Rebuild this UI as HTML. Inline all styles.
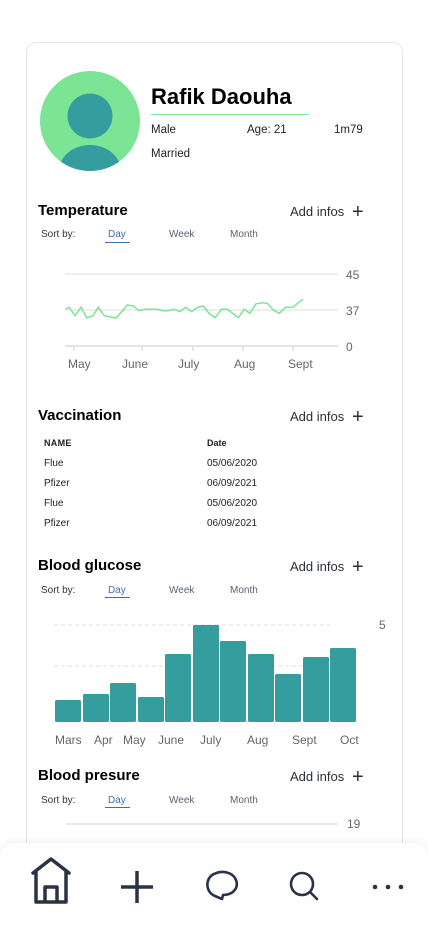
<!DOCTYPE html>
<html style="width:428px;height:926px;overflow:hidden"><head><meta charset="utf-8"><style>
*{margin:0;padding:0;box-sizing:border-box}
body{width:428px;height:926px;overflow:hidden;background:#fff;font-family:"Liberation Sans",Arial,sans-serif;position:relative;color:#111}
.a{position:absolute;white-space:nowrap}
.card{position:absolute;left:26px;top:42px;width:377px;height:870px;border:1px solid #e3e6ea;border-radius:10px;background:#fff}
.h{font-size:15px;font-weight:bold;color:#000;line-height:18px}
.add{font-size:13px;color:#2a2f3a;line-height:16px}
.sm{font-size:10px;color:#333;line-height:12px}
.g{font-size:10px;color:#5a6270;line-height:12px}
.tx{font-size:10px;color:#222;line-height:12px}
.ax{font-size:12px;color:#666;line-height:14px}
.nav{position:absolute;left:0;top:843px;width:428px;height:83px;background:#fff;border-radius:14px 14px 0 0;box-shadow:0 -2px 8px rgba(0,0,0,0.06)}
</style></head><body>
<div class="card"></div>
<svg class="a" style="left:40px;top:71px" width="100" height="100" viewBox="0 0 100 100">
<defs><clipPath id="c"><circle cx="50" cy="50" r="50"/></clipPath></defs>
<circle cx="50" cy="50" r="50" fill="#7be495"/>
<circle cx="50" cy="45" r="22.5" fill="#359d9e"/>
<g clip-path="url(#c)"><ellipse cx="50" cy="100" rx="31" ry="26" fill="#359d9e"/></g>
</svg>
<div class="a" style="left:151px;top:84px;font-size:22px;font-weight:bold;color:#000;line-height:26px">Rafik Daouha</div>
<div class="a" style="left:151px;top:114px;width:158px;height:1px;background:#7be495"></div>
<div class="a" style="left:151px;top:123px;font-size:11.5px;color:#222;line-height:14px">Male</div>
<div class="a" style="left:247px;top:123px;font-size:11.5px;color:#222;line-height:14px">Age: 21</div>
<div class="a" style="left:334px;top:123px;font-size:11.5px;color:#222;line-height:14px">1m79</div>
<div class="a" style="left:151px;top:147px;font-size:11.5px;color:#222;line-height:14px">Married</div>

<div class="a h" style="left:38px;top:202px">Temperature</div>
<div class="a add" style="left:290px;top:204px">Add infos</div>
<div class="a" style="left:352px;top:204px;font-size:20px;line-height:16px;color:#2a2f3a">+</div>
<div class="a sm" style="left:41px;top:229px">Sort by:</div>
<div class="a g" style="left:108px;top:229px;color:#3b6fb3">Day</div>
<div class="a" style="left:105px;top:242px;width:25px;height:1px;background:#3b6fb3"></div>
<div class="a g" style="left:169px;top:229px">Week</div>
<div class="a g" style="left:230px;top:229px">Month</div>
<svg class="a" style="left:0;top:260px" width="428" height="100">
<line x1="65" y1="14" x2="338" y2="14" stroke="#e8e8e8" stroke-width="1.5"/>
<line x1="65" y1="50" x2="338" y2="50" stroke="#e8e8e8" stroke-width="1.5"/>
<line x1="65" y1="86" x2="338" y2="86" stroke="#dcdcdc" stroke-width="1.5"/>
<g stroke="#ccc"><line x1="74" y1="87" x2="74" y2="91"/><line x1="142" y1="87" x2="142" y2="91"/><line x1="193" y1="87" x2="193" y2="91"/><line x1="243" y1="87" x2="243" y2="91"/><line x1="293" y1="87" x2="293" y2="91"/></g>
<polyline fill="none" stroke="#7be495" stroke-width="1.5" points="65,49.3 69.3,47.3 75,55.7 81,47.3 86.7,57.7 92.7,56 98.3,47.3 104.3,55.7 116,58 121.7,51.7 127.3,45 133.3,46 139,50.7 145,49.3 156.7,49.3 162.7,50.7 168.3,50.7 174,49.3 180,51.7 185.7,47.3 191.7,51.7 197.3,47.3 203.3,46 209,53.3 215,57.7 221.7,49.3 227.3,49.3 238.3,57.7 244,49.3 250,53.3 255.7,44 261.7,42.7 267.3,43.3 273.3,50 279.3,53.3 285.7,47.3 292.7,47.3 302.7,39.3"/>
</svg>
<div class="a ax" style="left:346px;top:268px">45</div>
<div class="a ax" style="left:346px;top:304px">37</div>
<div class="a ax" style="left:346px;top:340px">0</div>
<div class="a ax" style="left:68px;top:357px">May</div>
<div class="a ax" style="left:122px;top:357px">June</div>
<div class="a ax" style="left:178px;top:357px">July</div>
<div class="a ax" style="left:234px;top:357px">Aug</div>
<div class="a ax" style="left:288px;top:357px">Sept</div>

<div class="a h" style="left:38px;top:407px">Vaccination</div>
<div class="a add" style="left:290px;top:409px">Add infos</div>
<div class="a" style="left:352px;top:409px;font-size:20px;line-height:16px;color:#2a2f3a">+</div>
<div class="a" style="left:44px;top:438px;font-size:9px;font-weight:bold;color:#222;letter-spacing:.3px">NAME</div>
<div class="a" style="left:207px;top:438px;font-size:9px;font-weight:bold;color:#222">Date</div>
<div class="a tx" style="left:44px;top:458px">Flue</div><div class="a tx" style="left:207px;top:458px">05/06/2020</div>
<div class="a tx" style="left:44px;top:478px">Pfizer</div><div class="a tx" style="left:207px;top:478px">06/09/2021</div>
<div class="a tx" style="left:44px;top:498px">Flue</div><div class="a tx" style="left:207px;top:498px">05/06/2020</div>
<div class="a tx" style="left:44px;top:518px">Pfizer</div><div class="a tx" style="left:207px;top:518px">06/09/2021</div>

<div class="a h" style="left:38px;top:557px">Blood glucose</div>
<div class="a add" style="left:290px;top:559px">Add infos</div>
<div class="a" style="left:352px;top:559px;font-size:20px;line-height:16px;color:#2a2f3a">+</div>
<div class="a sm" style="left:41px;top:585px">Sort by:</div>
<div class="a g" style="left:108px;top:585px;color:#3b6fb3">Day</div>
<div class="a" style="left:105px;top:597px;width:25px;height:1px;background:#3b6fb3"></div>
<div class="a g" style="left:169px;top:585px">Week</div>
<div class="a g" style="left:230px;top:585px">Month</div>
<svg class="a" style="left:0;top:600px" width="428" height="130">
<line x1="54" y1="25" x2="330" y2="25" stroke="#ddd" stroke-dasharray="4,3"/>
<line x1="54" y1="66" x2="330" y2="66" stroke="#ddd" stroke-dasharray="4,3"/>
<g fill="#359d9e">
<rect x="55" y="100" width="26" height="22" rx="1.5"/>
<rect x="83" y="94" width="26" height="28" rx="1.5"/>
<rect x="110" y="83" width="26" height="39" rx="1.5"/>
<rect x="138" y="97" width="26" height="25" rx="1.5"/>
<rect x="165" y="54" width="26" height="68" rx="1.5"/>
<rect x="193" y="25" width="26" height="97" rx="1.5"/>
<rect x="220" y="41" width="26" height="81" rx="1.5"/>
<rect x="248" y="54" width="26" height="68" rx="1.5"/>
<rect x="275" y="74" width="26" height="48" rx="1.5"/>
<rect x="303" y="57" width="26" height="65" rx="1.5"/>
<rect x="330" y="48" width="26" height="74" rx="1.5"/>
</g>
</svg>
<div class="a ax" style="left:379px;top:618px">5</div>
<div class="a ax" style="left:55px;top:733px">Mars</div>
<div class="a ax" style="left:94px;top:733px">Apr</div>
<div class="a ax" style="left:123px;top:733px">May</div>
<div class="a ax" style="left:158px;top:733px">June</div>
<div class="a ax" style="left:200px;top:733px">July</div>
<div class="a ax" style="left:247px;top:733px">Aug</div>
<div class="a ax" style="left:292px;top:733px">Sept</div>
<div class="a ax" style="left:340px;top:733px">Oct</div>

<div class="a h" style="left:38px;top:767px">Blood presure</div>
<div class="a add" style="left:290px;top:769px">Add infos</div>
<div class="a" style="left:352px;top:769px;font-size:20px;line-height:16px;color:#2a2f3a">+</div>
<div class="a sm" style="left:41px;top:795px">Sort by:</div>
<div class="a g" style="left:108px;top:795px;color:#3b6fb3">Day</div>
<div class="a" style="left:105px;top:807px;width:25px;height:1px;background:#3b6fb3"></div>
<div class="a g" style="left:169px;top:795px">Week</div>
<div class="a g" style="left:230px;top:795px">Month</div>
<div class="a" style="left:66px;top:823px;width:272px;height:2px;background:#eaeaea"></div>
<div class="a ax" style="left:347px;top:817px">19</div>

<div class="nav"></div>
<svg class="a" style="left:0;top:843px" width="428" height="83" fill="none" stroke="#2a3344" stroke-linecap="round" stroke-linejoin="round">
<path d="M33 30 L51 16 L69 30 M36 28 V59 H66 V28 M45 59 V44 H57 V59" stroke-width="3.5"/>
<path d="M137 28 V60 M121 44 H153" stroke-width="3.5" stroke-linecap="butt"/>
<path d="M215 53 C205 49 205 35 214 31 C222 27 233 29 236 37 C239 45 233 52 223 52 L222 56 Z" stroke-width="2.6"/>
<circle cx="302" cy="41" r="11" stroke-width="2.6"/>
<path d="M310 49 L317 56" stroke-width="2.6"/>
<g fill="#2a3344" stroke="none"><circle cx="375" cy="44" r="2.3"/><circle cx="388" cy="44" r="2.3"/><circle cx="401" cy="44" r="2.3"/></g>
</svg>
</body></html>
